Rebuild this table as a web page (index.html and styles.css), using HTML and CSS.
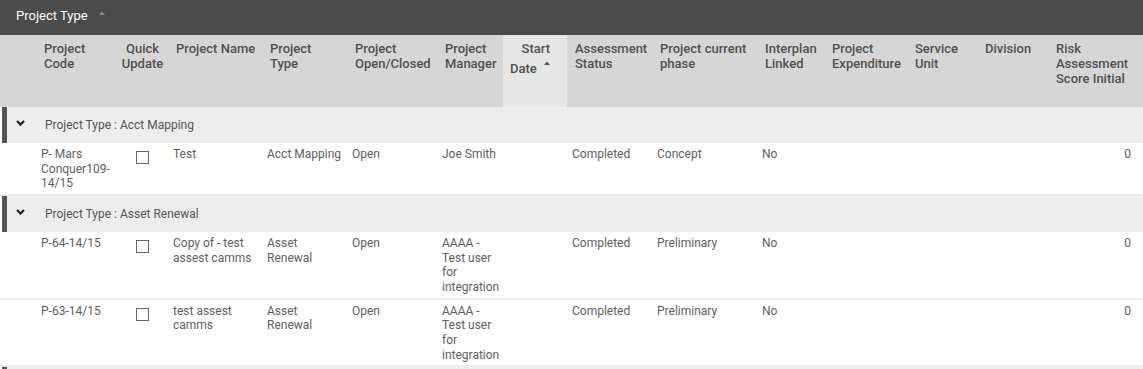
FILE: index.html
```html
<!DOCTYPE html>
<html lang="en">
<head>
<meta charset="utf-8">
<title>Projects grid</title>
<link rel="stylesheet" href="styles.css">
</head>
<body>
<div class="grid">
  <div class="group-panel">
    <span class="gp-label">Project Type</span>
    <svg class="gp-caret" width="6" height="4" viewBox="0 0 6 4"><polygon points="0,4 3,0.5 6,4" fill="#8a8a8a"/></svg>
  </div>

  <div class="row head">
    <div class="hc"></div>
    <div class="hc">Project Code</div>
    <div class="hc center">Quick Update</div>
    <div class="hc">Project Name</div>
    <div class="hc narrow">Project Type</div>
    <div class="hc">Project Open/Closed</div>
    <div class="hc">Project Manager</div>
    <div class="hc sorted"><span class="sd">Start</span><span class="sd sd2">Date <svg class="sort-caret" width="6" height="4" viewBox="0 0 6 4"><polygon points="0,4 3,0.5 6,4" fill="#555"/></svg></span></div>
    <div class="hc">Assessment Status</div>
    <div class="hc">Project current phase</div>
    <div class="hc">Interplan Linked</div>
    <div class="hc">Project Expenditure</div>
    <div class="hc">Service Unit</div>
    <div class="hc">Division</div>
    <div class="hc">Risk Assessment Score Initial</div>
    <div class="hc"></div>
  </div>

  <div class="row group">
    <div class="gexp"><svg width="9" height="6" viewBox="0 0 9 6"><path d="M1 1 L4.5 4.6 L8 1" fill="none" stroke="#222" stroke-width="2.2"/></svg></div>
    <div class="gtext">Project Type : Acct Mapping</div>
  </div>
  <div class="row data">
    <div class="dc"></div>
    <div class="dc">P- Mars Conquer109-<wbr>14/15</div>
    <div class="dc check"><span class="cb"></span></div>
    <div class="dc">Test</div>
    <div class="dc">Acct Mapping</div>
    <div class="dc">Open</div>
    <div class="dc">Joe Smith</div>
    <div class="dc"></div>
    <div class="dc">Completed</div>
    <div class="dc">Concept</div>
    <div class="dc">No</div>
    <div class="dc"></div>
    <div class="dc"></div>
    <div class="dc"></div>
    <div class="dc num">0</div>
    <div class="dc"></div>
  </div>

  <div class="row group">
    <div class="gexp"><svg width="9" height="6" viewBox="0 0 9 6"><path d="M1 1 L4.5 4.6 L8 1" fill="none" stroke="#222" stroke-width="2.2"/></svg></div>
    <div class="gtext">Project Type : Asset Renewal</div>
  </div>
  <div class="row data">
    <div class="dc"></div>
    <div class="dc">P-64-14/15</div>
    <div class="dc check"><span class="cb"></span></div>
    <div class="dc">Copy of - test assest camms</div>
    <div class="dc">Asset Renewal</div>
    <div class="dc">Open</div>
    <div class="dc">AAAA - Test user for integration</div>
    <div class="dc"></div>
    <div class="dc">Completed</div>
    <div class="dc">Preliminary</div>
    <div class="dc">No</div>
    <div class="dc"></div>
    <div class="dc"></div>
    <div class="dc"></div>
    <div class="dc num">0</div>
    <div class="dc"></div>
  </div>
  <div class="row data sep">
    <div class="dc"></div>
    <div class="dc">P-63-14/15</div>
    <div class="dc check"><span class="cb"></span></div>
    <div class="dc">test assest camms</div>
    <div class="dc">Asset Renewal</div>
    <div class="dc">Open</div>
    <div class="dc">AAAA - Test user for integration</div>
    <div class="dc"></div>
    <div class="dc">Completed</div>
    <div class="dc">Preliminary</div>
    <div class="dc">No</div>
    <div class="dc"></div>
    <div class="dc"></div>
    <div class="dc"></div>
    <div class="dc num">0</div>
    <div class="dc"></div>
  </div>

  <div class="row group">
    <div class="gexp"></div>
    <div class="gtext"></div>
  </div>
</div>
</body>
</html>
```

FILE: styles.css
```css
html, body {
  margin: 0;
  padding: 0;
  background: #fff;
  overflow: hidden;
}

body {
  font-family: Roboto, "Liberation Sans", Arial, sans-serif;
  font-size: 12px;
  color: #5a5a5a;
}

.grid {
  width: 1143px;
  overflow: hidden;
}

.group-panel {
  height: 35px;
  background: #4b4b4b;
  display: flex;
  align-items: center;
  padding-left: 16px;
  box-sizing: border-box;
}

.gp-label {
  color: #fff;
  font-size: 13px;
  line-height: 16px;
  margin-top: -3px;
}

.gp-caret {
  margin-left: 11px;
  margin-top: -10px;
}

.row {
  display: grid;
  grid-template-columns: 36px 81px 51px 94px 85px 90px 66px 64px 85px 105px 67px 83px 70px 71px 87px 8px;
}

.head {
  height: 72px;
  background: #d6d6d6;
}

.hc {
  padding: 6px 2px 0 8px;
  font-size: 13px;
  font-weight: 500;
  line-height: 15px;
  color: #505050;
}

.hc.narrow {
  padding-right: 8px;
}

.hc.center {
  text-align: center;
  padding-left: 4px;
  padding-right: 4px;
}

.hc.sorted {
  background: #e6e6e6;
  text-align: right;
  padding-right: 17px;
  padding-left: 4px;
}

.sd {
  display: block;
}

.sd2 {
  margin-top: 5px;
}

.sort-caret {
  vertical-align: 8px;
  margin-left: 4px;
}

.group {
  height: 36px;
  background: #ededed;
  align-items: center;
}

.data + .group {
  border-top: 2px solid #ededed;
}

.gexp {
  height: 100%;
  display: flex;
  align-items: center;
  padding-left: 16px;
  padding-bottom: 5px;
  box-sizing: border-box;
  box-shadow: inset 2px 0 0 #fff, inset 7px 0 0 #555;
}

.gtext {
  grid-column: 2 / -1;
  padding-left: 9px;
  color: #555;
}

.data {
  background: #fff;
}

.data.sep {
  border-top: 2px solid #ececec;
}

.dc {
  padding: 4px 3px 3px 5px;
  line-height: 14.67px;
  color: #5e5e5e;
}

.dc.check {
  display: flex;
  justify-content: center;
  padding-left: 0;
  padding-right: 1px;
}

.cb {
  display: block;
  width: 11px;
  height: 11px;
  border: 1px solid #666;
  background: #fff;
  margin-top: 4px;
}

.dc.num {
  text-align: right;
  padding-right: 4px;
}
```
